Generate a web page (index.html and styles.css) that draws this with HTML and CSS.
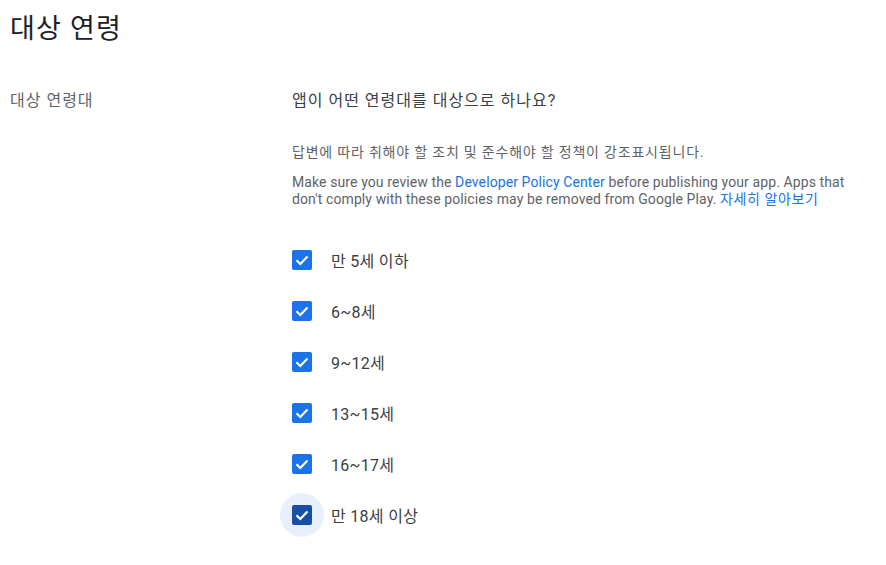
FILE: index.html
```html
<!DOCTYPE html>
<html lang="ko">
<head>
<meta charset="utf-8">
<link rel="stylesheet" href="styles.css">
</head>
<body>
<div class="page">
  <h1 class="title">대상 연령</h1>
  <div class="section">
    <div class="label">대상 연령대</div>
    <div class="content">
      <div class="question">앱이 어떤 연령대를 대상으로 하나요?</div>
      <p class="helper">답변에 따라 취해야 할 조치 및 준수해야 할 정책이 강조표시됩니다.</p>
      <p class="note">Make sure you review the <a class="link" href="#">Developer Policy Center</a> before publishing your app. Apps that don't comply with these policies may be removed from Google Play. <a class="link ko" href="#">자세히 알아보기</a></p>
      <ul class="options">
        <li class="option"><span class="cb-wrap"><span class="cb"><svg viewBox="0 0 20 20" class="check"><path d="M4.5 10.2 L8.3 14 L15.5 6.6"/></svg></span></span><span class="opt-text">만 5세 이하</span></li>
        <li class="option"><span class="cb-wrap"><span class="cb"><svg viewBox="0 0 20 20" class="check"><path d="M4.5 10.2 L8.3 14 L15.5 6.6"/></svg></span></span><span class="opt-text">6~8세</span></li>
        <li class="option"><span class="cb-wrap"><span class="cb"><svg viewBox="0 0 20 20" class="check"><path d="M4.5 10.2 L8.3 14 L15.5 6.6"/></svg></span></span><span class="opt-text">9~12세</span></li>
        <li class="option"><span class="cb-wrap"><span class="cb"><svg viewBox="0 0 20 20" class="check"><path d="M4.5 10.2 L8.3 14 L15.5 6.6"/></svg></span></span><span class="opt-text">13~15세</span></li>
        <li class="option"><span class="cb-wrap"><span class="cb"><svg viewBox="0 0 20 20" class="check"><path d="M4.5 10.2 L8.3 14 L15.5 6.6"/></svg></span></span><span class="opt-text">16~17세</span></li>
        <li class="option"><span class="cb-wrap focused"><span class="cb dark"><svg viewBox="0 0 20 20" class="check"><path d="M4.5 10.2 L8.3 14 L15.5 6.6"/></svg></span></span><span class="opt-text">만 18세 이상</span></li>
      </ul>
    </div>
  </div>
</div>
</body>
</html>
```
FILE: styles.css
```css
html, body {
  margin: 0;
  padding: 0;
  background: #ffffff;
}
body {
  font-family: Roboto, "Noto Sans CJK KR", sans-serif;
  color: #3c4043;
}
.page {
  padding: 11px 10px 0 10px;
}
.title {
  margin: 0;
  font-size: 27px;
  font-weight: 400;
  letter-spacing: 1.2px;
  line-height: 36px;
  color: #202124;
}
.section {
  display: grid;
  grid-template-columns: 282px 1fr;
  margin-top: 44px;
}
.label {
  font-size: 16px;
  letter-spacing: 1px;
  line-height: 20px;
  color: #5f6368;
}
.question {
  font-size: 16px;
  letter-spacing: 1px;
  line-height: 20px;
  color: #3c4043;
}
.helper {
  margin: 32px 0 0 0;
  font-size: 14px;
  letter-spacing: 0.8px;
  line-height: 18px;
  color: #5f6368;
}
.note {
  margin: 13px 0 0 0;
  font-size: 14px;
  letter-spacing: 0.1px;
  line-height: 17px;
  color: #5f6368;
  max-width: 572px;
}
.link {
  color: #1a73e8;
  text-decoration: none;
}
.link.ko {
  letter-spacing: 0.6px;
}
.options {
  list-style: none;
  margin: 30px 0 0 -12px;
  padding: 0;
  display: flex;
  flex-direction: column;
  gap: 7px;
}
.option {
  display: flex;
  align-items: center;
  height: 44px;
}
.cb-wrap {
  width: 44px;
  height: 44px;
  border-radius: 50%;
  display: flex;
  align-items: center;
  justify-content: center;
  flex: none;
}
.cb-wrap.focused {
  background: #e8f0fe;
}
.cb {
  width: 20px;
  height: 20px;
  border-radius: 2px;
  background: #1a73e8;
  display: flex;
}
.cb.dark {
  background: #174ea6;
}
.check {
  width: 20px;
  height: 20px;
}
.check path {
  fill: none;
  stroke: #ffffff;
  stroke-width: 2.2;
}
.opt-text {
  margin-left: 7px;
  font-size: 16px;
  letter-spacing: 0.3px;
  color: #3c4043;
}
```
